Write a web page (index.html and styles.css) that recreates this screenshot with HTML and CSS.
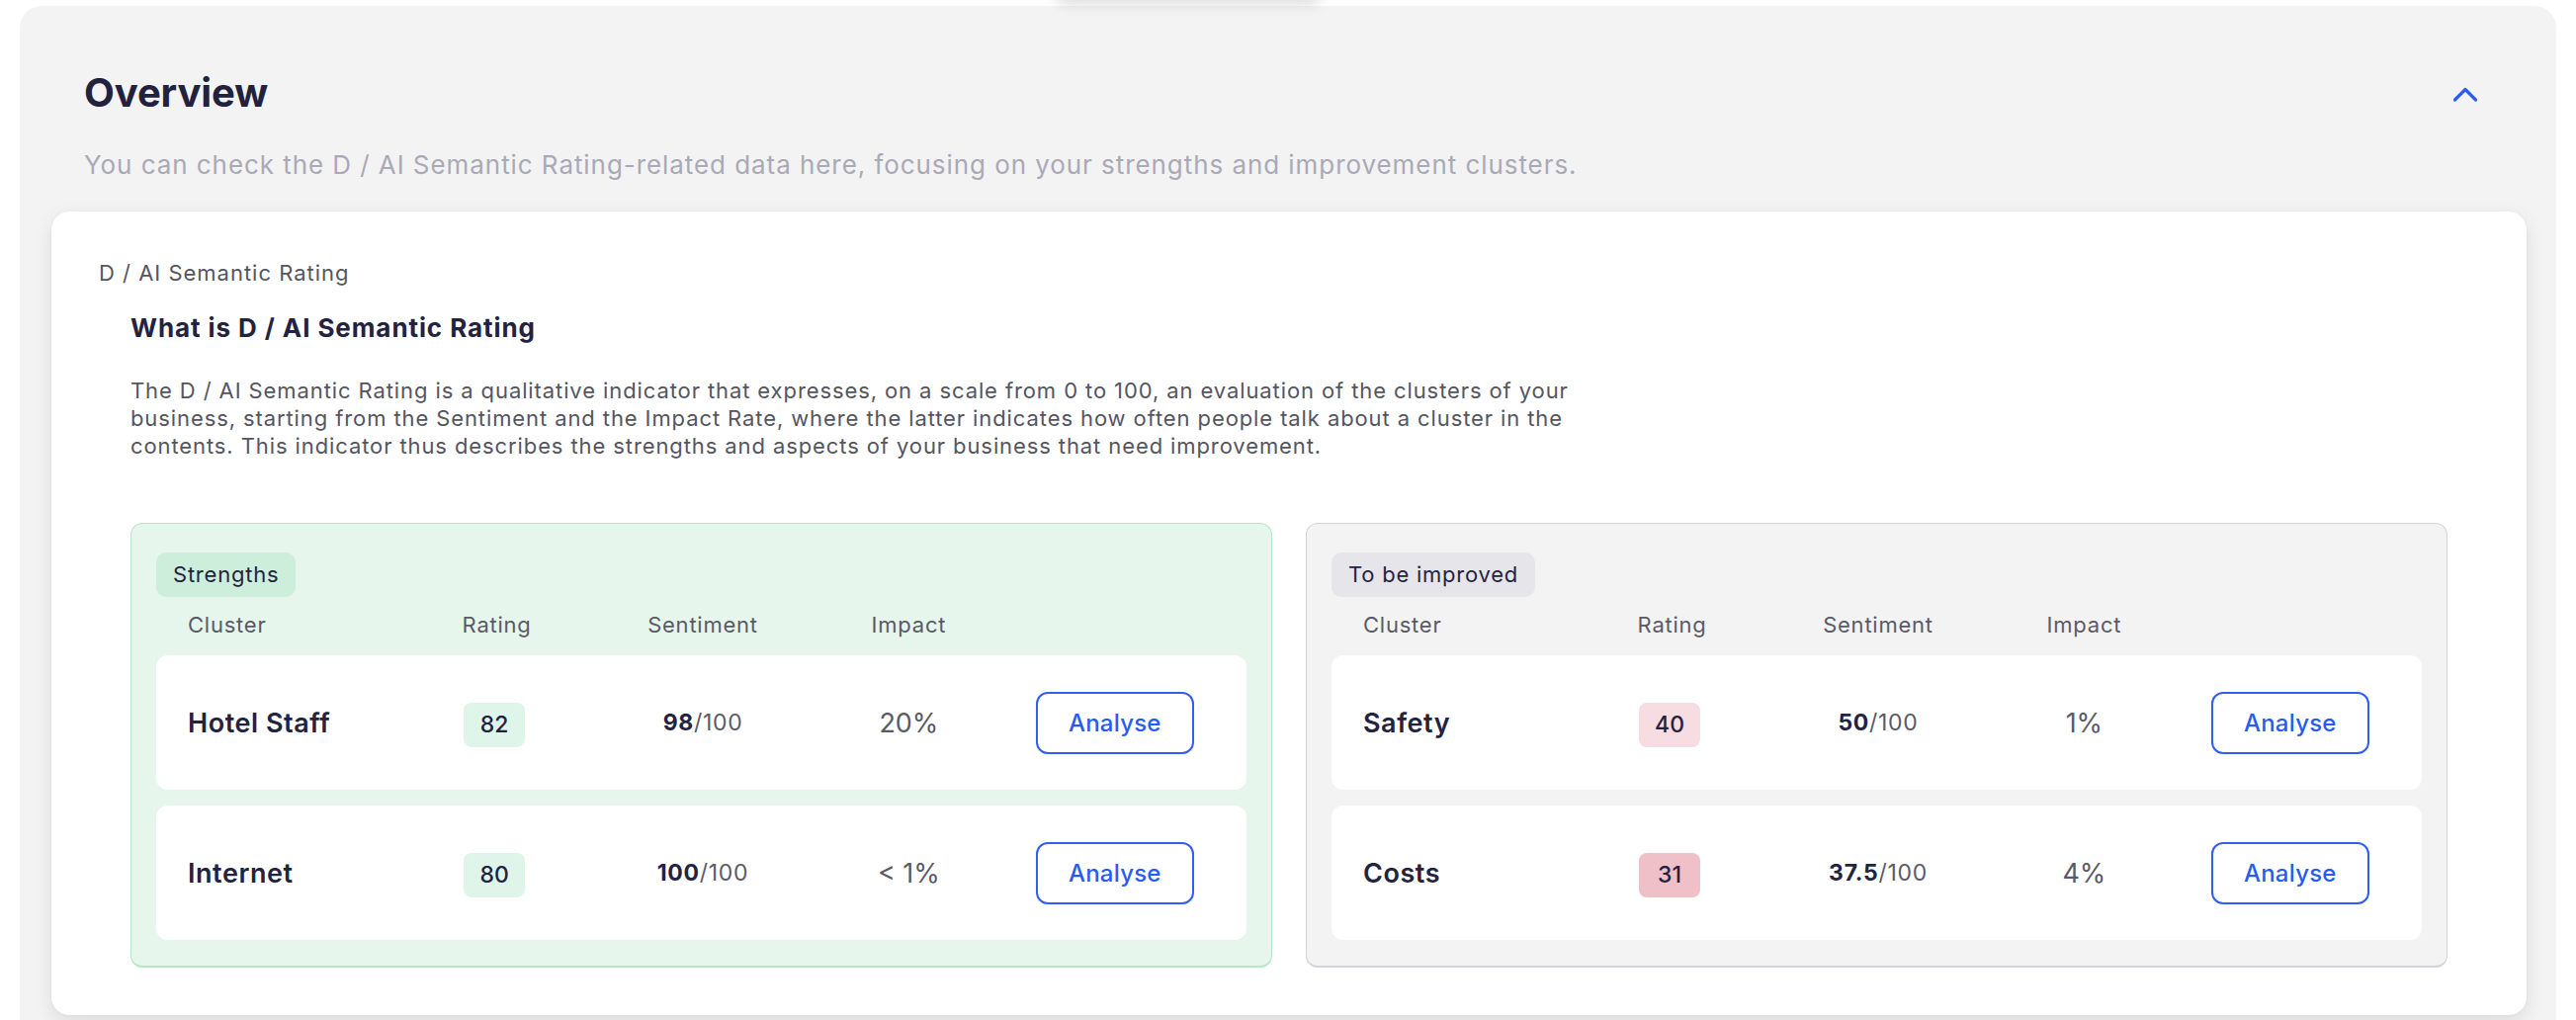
FILE: index.html
```html
<!DOCTYPE html>
<html lang="en">
<head>
<meta charset="utf-8">
<title>Overview</title>
<link rel="stylesheet" href="styles.css">
</head>
<body>
<div class="top-shadow"></div>
<section class="overview">
  <header class="overview-head">
    <h1 class="overview-title">Overview</h1>
    <button class="collapse-btn" aria-label="Collapse">
      <svg width="26" height="18" viewBox="0 0 26 18"><path d="M2.5 15 L13 4.5 L23.5 15" fill="none" stroke="#2b5cf6" stroke-width="3.2" stroke-linecap="round" stroke-linejoin="round"/></svg>
    </button>
  </header>
  <p class="overview-sub">You can check the D / AI Semantic Rating-related data here, focusing on your strengths and improvement clusters.</p>

  <div class="card">
    <div class="card-label">D / AI Semantic Rating</div>
    <div class="card-body">
      <h2 class="card-title">What is D / AI Semantic Rating</h2>
      <p class="card-text">The D / AI Semantic Rating is a qualitative indicator that expresses, on a scale from 0 to 100, an evaluation of the clusters of your business, starting from the Sentiment and the Impact Rate, where the latter indicates how often people talk about a cluster in the contents. This indicator thus describes the strengths and aspects of your business that need improvement.</p>

      <div class="panels">
        <div class="panel panel-good">
          <span class="panel-tag">Strengths</span>
          <div class="grid grid-head">
            <span class="c-left">Cluster</span><span>Rating</span><span>Sentiment</span><span>Impact</span><span></span>
          </div>
          <div class="row grid">
            <span class="c-left name">Hotel Staff</span>
            <span><b class="rate rate-g">82</b></span>
            <span class="senti"><b>98</b>/100</span>
            <span class="impact">20%</span>
            <span><button class="analyse">Analyse</button></span>
          </div>
          <div class="row grid">
            <span class="c-left name">Internet</span>
            <span><b class="rate rate-g">80</b></span>
            <span class="senti"><b>100</b>/100</span>
            <span class="impact">&lt; 1%</span>
            <span><button class="analyse">Analyse</button></span>
          </div>
        </div>

        <div class="panel panel-bad">
          <span class="panel-tag">To be improved</span>
          <div class="grid grid-head">
            <span class="c-left">Cluster</span><span>Rating</span><span>Sentiment</span><span>Impact</span><span></span>
          </div>
          <div class="row grid">
            <span class="c-left name">Safety</span>
            <span><b class="rate rate-p1">40</b></span>
            <span class="senti"><b>50</b>/100</span>
            <span class="impact">1%</span>
            <span><button class="analyse">Analyse</button></span>
          </div>
          <div class="row grid">
            <span class="c-left name">Costs</span>
            <span><b class="rate rate-p2">31</b></span>
            <span class="senti"><b>37.5</b>/100</span>
            <span class="impact">4%</span>
            <span><button class="analyse">Analyse</button></span>
          </div>
        </div>
      </div>
    </div>
  </div>
</section>
</body>
</html>
```
FILE: styles.css
```css
* { box-sizing: border-box; }
html, body { margin: 0; padding: 0; background: #ffffff; }
body {
  font-family: Inter, "Noto Sans", "Liberation Sans", sans-serif;
  color: #23233f;
  padding: 6px 20px 0 20px;
  overflow: hidden;
  height: 1032px;
  position: relative;
}
.top-shadow {
  position: absolute;
  top: -40px;
  left: 1068px;
  width: 268px;
  height: 40px;
  background: #fff;
  box-shadow: 0 4px 14px rgba(0,0,0,0.14);
  border-radius: 10px;
  z-index: 2;
}
.overview {
  background: #f3f3f3;
  border-radius: 22px 22px 0 0;
  padding: 0 30px 0 32px;
  height: 1026px;
  overflow: hidden;
}
.overview-head {
  display: flex;
  align-items: center;
  justify-content: space-between;
  padding: 64px 47px 0 33px;
}
.overview-title {
  margin: 0;
  font-size: 40px;
  line-height: 48px;
  font-weight: 700;
  color: #22223e;
  letter-spacing: -0.1px;
}
.collapse-btn {
  border: 0;
  background: transparent;
  padding: 0;
  width: 30px;
  height: 30px;
  display: flex;
  align-items: center;
  justify-content: center;
  margin-top: 1px;
  cursor: pointer;
}
.overview-sub {
  margin: 33px 0 0 33px;
  font-size: 26px;
  line-height: 32px;
  color: #aaa9b6;
  letter-spacing: 0.036em;
}
.card {
  margin-top: 31px;
  background: #fff;
  border-radius: 18px;
  box-shadow: 0 6px 18px rgba(0,0,0,0.10), 0 0 2px rgba(0,0,0,0.06);
  padding: 49px 48px 48px 48px;
}
.card-label {
  font-size: 22px;
  line-height: 27px;
  color: #55555f;
  letter-spacing: 0.045em;
}
.card-body {
  padding: 0 32px;
}
.card-title {
  margin: 26px 0 0 0;
  font-size: 26px;
  line-height: 32px;
  font-weight: 700;
  color: #23233f;
  letter-spacing: 0.035em;
}
.card-text {
  margin: 33px 0 0 0;
  max-width: 1500px;
  font-size: 22px;
  line-height: 28px;
  color: #55555f;
  letter-spacing: 0.9px;
}
.panels {
  margin-top: 64px;
  display: grid;
  grid-template-columns: 1fr 1fr;
  gap: 34px;
}
.panel {
  border: 1px solid;
  border-bottom-width: 2px;
  border-radius: 12px;
  padding: 29px 25px 26px 25px;
}
.panel-good { background: #e6f6ec; border-color: #b3e7c5; }
.panel-bad { background: #f3f3f3; border-color: #d3d3d9; }
.panel-tag {
  display: inline-block;
  font-size: 22px;
  line-height: 45px;
  height: 45px;
  padding: 0 17px;
  border-radius: 10px;
  color: #23233f;
  letter-spacing: 0.035em;
}
.panel-good .panel-tag { background: #cdeedb; }
.panel-bad .panel-tag { background: #e6e6ea; }
.grid {
  display: grid;
  grid-template-columns: repeat(5, 1fr);
  align-items: center;
  padding: 0 29px 0 32px;
  text-align: center;
}
.c-left { text-align: left; }
.grid-head {
  margin: 14px 0 17px 0;
  font-size: 22px;
  line-height: 28px;
  color: #5a5a66;
  letter-spacing: 0.035em;
}
.row {
  background: #fff;
  border-radius: 12px;
  height: 136px;
}
.row + .row { margin-top: 16px; }
.name {
  font-size: 27px;
  font-weight: 600;
  color: #23233f;
  letter-spacing: 0.02em;
}
.rate {
  display: inline-block;
  width: 62px;
  height: 45px;
  line-height: 45px;
  border-radius: 8px;
  font-size: 23px;
  font-weight: 500;
  color: #23233f;
  margin: 4px 0 0 -5px;
}
.rate-g { background: #dff5ea; }
.rate-p1 { background: #f7dde2; }
.rate-p2 { background: #f0c0c8; }
.senti {
  font-size: 23px;
  color: #5a5a66;
  letter-spacing: 0.03em;
}
.senti b { color: #23233f; font-weight: 700; }
.impact {
  font-size: 27px;
  color: #5a5a66;
}
.analyse {
  width: 160px;
  height: 63px;
  border: 2px solid #2f5ef3;
  border-radius: 12px;
  background: #fff;
  color: #2a5bef;
  font-family: inherit;
  font-size: 24px;
  font-weight: 500;
  letter-spacing: 0.01em;
  cursor: pointer;
}
```
